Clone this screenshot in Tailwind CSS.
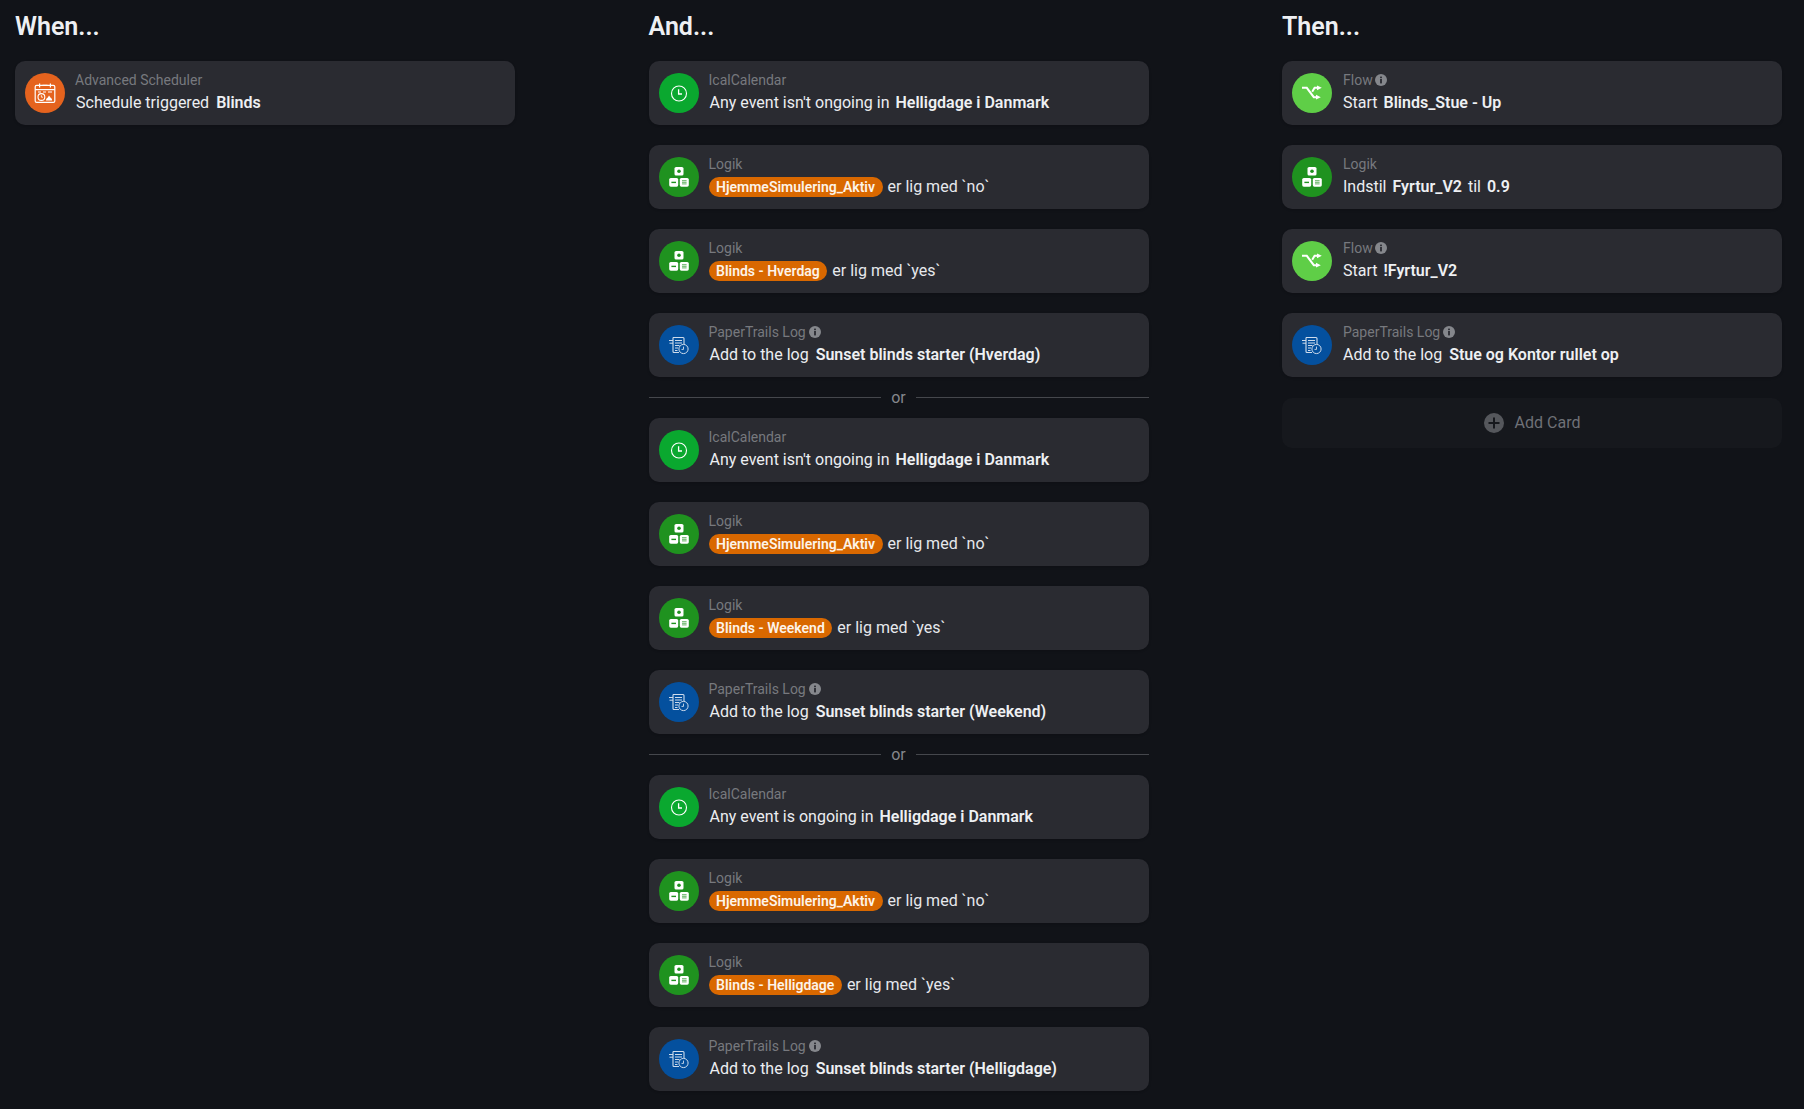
<!DOCTYPE html>
<html lang="en">
  <head>
    <meta charset="UTF-8" />
    <title>Flow</title>
    <script src="https://cdn.jsdelivr.net/npm/@tailwindcss/browser@4"></script>
  </head>
  <body class="bg-[#111318] font-[Roboto,sans-serif] h-[1109px] overflow-hidden">
    <svg class="hidden">
      <symbol id="i-clock" viewBox="0 0 40 40">
        <circle cx="20" cy="20.500" r="7.500" fill="none" stroke="#fff" stroke-width="1.100" />
        <path d="M19.600 16.300v4.700h3.400" fill="none" stroke="#fff" stroke-width="1.300" />
      </symbol>
      <symbol id="i-logic" viewBox="0 0 40 40">
        <rect x="15.500" y="10" width="9" height="8.600" rx="1.600" fill="#fff" />
        <rect x="10.200" y="21" width="9" height="8.700" rx="1.600" fill="#fff" />
        <rect x="20.800" y="21" width="9" height="8.700" rx="1.600" fill="#fff" />
        <circle cx="20" cy="14.300" r="1.800" fill="#1f921f" />
        <rect x="12.400" y="24.700" width="4.600" height="1.400" fill="#1f921f" />
        <path d="M23 23.700h4.600M23 25.300h4.600M23 26.900h4.600" stroke="#1f921f" stroke-width=".7" />
      </symbol>
      <symbol id="i-log" viewBox="0 0 40 40">
        <path d="M14 12.500h10a1 1 0 0 1 1 1v6M14 12.500v14a1 1 0 0 0 1 1h5" fill="none" stroke="#cfdcec" stroke-width="1.100" />
        <path d="M10 15.500H14M10.500 18.200h3.500M16 15.500h7M16 18h7M16 20.500h4.500M16 23h3M16 25.500h2.500" fill="none" stroke="#cfdcec" stroke-width="1" />
        <circle cx="24.500" cy="24" r="4.600" fill="#04509e" stroke="#cfdcec" stroke-width="1" />
        <path d="M24.500 21.600v2.800h-2" fill="none" stroke="#cfdcec" stroke-width=".9" />
      </symbol>
      <symbol id="i-flow" viewBox="0 0 40 40">
        <path d="M10 14.800h4.800l7 9.400h3" fill="none" stroke="#fff" stroke-width="2" />
        <path d="M20.200 18.800l2.400-4h2.600" fill="none" stroke="#fff" stroke-width="2" />
        <path d="M25 12.400l4.800 2.400-4.800 2.400zM24 21.800l4.800 2.400-4.800 2.400z" fill="#fff" />
      </symbol>
      <symbol id="i-cal" viewBox="0 0 40 40">
        <rect x="10.200" y="12.400" width="19.600" height="17" rx="1.400" fill="none" stroke="#fff" stroke-width="1.200" />
        <path d="M10.200 16.600h19.600M14.600 10.400v4M25.400 10.400v4M17.500 12.400h5" fill="none" stroke="#fff" stroke-width="1.200" />
        <path d="M13 19h3M18 19h3M23 19h4" stroke="#fff" stroke-width="1" />
        <circle cx="16.400" cy="24" r="3.400" fill="none" stroke="#fff" stroke-width="1.100" />
        <path d="M16.400 22.200v2h1.600" fill="none" stroke="#fff" stroke-width=".8" />
        <path d="M21 27.400c0-2 1-2.200 1.800-3l1.200-2 1.400 2c.8.600 1.700 1.200 1.700 3z" fill="#fff" />
      </symbol>
      <symbol id="i-info" viewBox="0 0 12 12">
        <circle cx="6" cy="6" r="6" fill="#85878c" />
        <rect x="5.100" y="5" width="1.800" height="4.400" fill="#2a2b31" />
        <rect x="5.100" y="2.600" width="1.800" height="1.600" fill="#2a2b31" />
      </symbol>
    </svg>

    <main class="flex gap-[133.5px] pl-[15px]">
      <!-- When -->
      <section class="w-[500px] shrink-0">
        <h2 class="h-[28px] mt-[13px] mb-[20px] text-[25px] leading-[28px] font-semibold text-[#eef0f3]">When...</h2>
        <div class="flex h-[64px] rounded-[10px] bg-[#2a2b31] pl-[10px] pt-[12px] shadow-sm">
          <div class="w-[40px] h-[40px] rounded-full bg-[#e5631e] shrink-0"><svg class="w-[40px] h-[40px]"><use href="#i-cal" /></svg></div>
          <div class="ml-[10px] -mt-[3px]">
            <div class="flex items-center h-[20px] text-sm text-[#77797e]">Advanced Scheduler</div>
            <div class="flex items-center h-[24px] mt-px ml-px text-base text-[#eceef1]">Schedule triggered<b class="ml-[7px] font-semibold text-[#eef0f3]">Blinds</b></div>
          </div>
        </div>
      </section>

      <!-- And -->
      <section class="w-[500px] shrink-0">
        <h2 class="h-[28px] mt-[13px] mb-[20px] text-[25px] leading-[28px] font-semibold text-[#eef0f3]">And...</h2>
        <div class="flex flex-col gap-[20px]">
          <div class="flex h-[64px] rounded-[10px] bg-[#2a2b31] pl-[10px] pt-[12px] shadow-sm">
            <div class="w-[40px] h-[40px] rounded-full bg-[#0aa82f] shrink-0"><svg class="w-[40px] h-[40px]"><use href="#i-clock" /></svg></div>
            <div class="ml-[10px] -mt-[3px]">
              <div class="flex items-center h-[20px] text-sm text-[#77797e]">IcalCalendar</div>
              <div class="flex items-center h-[24px] mt-px ml-px text-base text-[#eceef1]">Any event isn't ongoing in<b class="ml-[6px] font-semibold text-[#eef0f3]">Helligdage i Danmark</b></div>
            </div>
          </div>
          <div class="flex h-[64px] rounded-[10px] bg-[#2a2b31] pl-[10px] pt-[12px] shadow-sm">
            <div class="w-[40px] h-[40px] rounded-full bg-[#1f921f] shrink-0"><svg class="w-[40px] h-[40px]"><use href="#i-logic" /></svg></div>
            <div class="ml-[10px] -mt-[3px]">
              <div class="flex items-center h-[20px] text-sm text-[#77797e]">Logik</div>
              <div class="flex items-center h-[24px] mt-px text-base text-[#e6e8ec]"><span class="flex items-center h-[20px] -mt-px rounded-full bg-[#d96800] px-[7.5px] mr-[5px] text-sm font-semibold text-[#fdf3e8]">HjemmeSimulering_Aktiv</span>er lig med `no`</div>
            </div>
          </div>
          <div class="flex h-[64px] rounded-[10px] bg-[#2a2b31] pl-[10px] pt-[12px] shadow-sm">
            <div class="w-[40px] h-[40px] rounded-full bg-[#1f921f] shrink-0"><svg class="w-[40px] h-[40px]"><use href="#i-logic" /></svg></div>
            <div class="ml-[10px] -mt-[3px]">
              <div class="flex items-center h-[20px] text-sm text-[#77797e]">Logik</div>
              <div class="flex items-center h-[24px] mt-px text-base text-[#e6e8ec]"><span class="flex items-center h-[20px] -mt-px rounded-full bg-[#d96800] px-[7.5px] mr-[5px] text-sm font-semibold text-[#fdf3e8]">Blinds - Hverdag</span>er lig med `yes`</div>
            </div>
          </div>
          <div class="flex h-[64px] rounded-[10px] bg-[#2a2b31] pl-[10px] pt-[12px] shadow-sm">
            <div class="w-[40px] h-[40px] rounded-full bg-[#04509e] shrink-0"><svg class="w-[40px] h-[40px]"><use href="#i-log" /></svg></div>
            <div class="ml-[10px] -mt-[3px]">
              <div class="flex items-center h-[20px] text-sm text-[#77797e]">PaperTrails Log<svg class="w-[12px] h-[12px] ml-[3px]"><use href="#i-info" /></svg></div>
              <div class="flex items-center h-[24px] mt-px ml-px text-base text-[#eceef1]">Add to the log<b class="ml-[7px] font-semibold text-[#eef0f3]">Sunset blinds starter (Hverdag)</b></div>
            </div>
          </div>
        </div>

        <div class="flex items-center h-[41px] text-base text-[#85878c]"><span class="grow h-px bg-[#45474c]"></span><span class="mx-[10px]">or</span><span class="grow h-px bg-[#45474c]"></span></div>

        <div class="flex flex-col gap-[20px]">
          <div class="flex h-[64px] rounded-[10px] bg-[#2a2b31] pl-[10px] pt-[12px] shadow-sm">
            <div class="w-[40px] h-[40px] rounded-full bg-[#0aa82f] shrink-0"><svg class="w-[40px] h-[40px]"><use href="#i-clock" /></svg></div>
            <div class="ml-[10px] -mt-[3px]">
              <div class="flex items-center h-[20px] text-sm text-[#77797e]">IcalCalendar</div>
              <div class="flex items-center h-[24px] mt-px ml-px text-base text-[#eceef1]">Any event isn't ongoing in<b class="ml-[6px] font-semibold text-[#eef0f3]">Helligdage i Danmark</b></div>
            </div>
          </div>
          <div class="flex h-[64px] rounded-[10px] bg-[#2a2b31] pl-[10px] pt-[12px] shadow-sm">
            <div class="w-[40px] h-[40px] rounded-full bg-[#1f921f] shrink-0"><svg class="w-[40px] h-[40px]"><use href="#i-logic" /></svg></div>
            <div class="ml-[10px] -mt-[3px]">
              <div class="flex items-center h-[20px] text-sm text-[#77797e]">Logik</div>
              <div class="flex items-center h-[24px] mt-px text-base text-[#e6e8ec]"><span class="flex items-center h-[20px] -mt-px rounded-full bg-[#d96800] px-[7.5px] mr-[5px] text-sm font-semibold text-[#fdf3e8]">HjemmeSimulering_Aktiv</span>er lig med `no`</div>
            </div>
          </div>
          <div class="flex h-[64px] rounded-[10px] bg-[#2a2b31] pl-[10px] pt-[12px] shadow-sm">
            <div class="w-[40px] h-[40px] rounded-full bg-[#1f921f] shrink-0"><svg class="w-[40px] h-[40px]"><use href="#i-logic" /></svg></div>
            <div class="ml-[10px] -mt-[3px]">
              <div class="flex items-center h-[20px] text-sm text-[#77797e]">Logik</div>
              <div class="flex items-center h-[24px] mt-px text-base text-[#e6e8ec]"><span class="flex items-center h-[20px] -mt-px rounded-full bg-[#d96800] px-[7.5px] mr-[5px] text-sm font-semibold text-[#fdf3e8]">Blinds - Weekend</span>er lig med `yes`</div>
            </div>
          </div>
          <div class="flex h-[64px] rounded-[10px] bg-[#2a2b31] pl-[10px] pt-[12px] shadow-sm">
            <div class="w-[40px] h-[40px] rounded-full bg-[#04509e] shrink-0"><svg class="w-[40px] h-[40px]"><use href="#i-log" /></svg></div>
            <div class="ml-[10px] -mt-[3px]">
              <div class="flex items-center h-[20px] text-sm text-[#77797e]">PaperTrails Log<svg class="w-[12px] h-[12px] ml-[3px]"><use href="#i-info" /></svg></div>
              <div class="flex items-center h-[24px] mt-px ml-px text-base text-[#eceef1]">Add to the log<b class="ml-[7px] font-semibold text-[#eef0f3]">Sunset blinds starter (Weekend)</b></div>
            </div>
          </div>
        </div>

        <div class="flex items-center h-[41px] text-base text-[#85878c]"><span class="grow h-px bg-[#45474c]"></span><span class="mx-[10px]">or</span><span class="grow h-px bg-[#45474c]"></span></div>

        <div class="flex flex-col gap-[20px]">
          <div class="flex h-[64px] rounded-[10px] bg-[#2a2b31] pl-[10px] pt-[12px] shadow-sm">
            <div class="w-[40px] h-[40px] rounded-full bg-[#0aa82f] shrink-0"><svg class="w-[40px] h-[40px]"><use href="#i-clock" /></svg></div>
            <div class="ml-[10px] -mt-[3px]">
              <div class="flex items-center h-[20px] text-sm text-[#77797e]">IcalCalendar</div>
              <div class="flex items-center h-[24px] mt-px ml-px text-base text-[#eceef1]">Any event is ongoing in<b class="ml-[6px] font-semibold text-[#eef0f3]">Helligdage i Danmark</b></div>
            </div>
          </div>
          <div class="flex h-[64px] rounded-[10px] bg-[#2a2b31] pl-[10px] pt-[12px] shadow-sm">
            <div class="w-[40px] h-[40px] rounded-full bg-[#1f921f] shrink-0"><svg class="w-[40px] h-[40px]"><use href="#i-logic" /></svg></div>
            <div class="ml-[10px] -mt-[3px]">
              <div class="flex items-center h-[20px] text-sm text-[#77797e]">Logik</div>
              <div class="flex items-center h-[24px] mt-px text-base text-[#e6e8ec]"><span class="flex items-center h-[20px] -mt-px rounded-full bg-[#d96800] px-[7.5px] mr-[5px] text-sm font-semibold text-[#fdf3e8]">HjemmeSimulering_Aktiv</span>er lig med `no`</div>
            </div>
          </div>
          <div class="flex h-[64px] rounded-[10px] bg-[#2a2b31] pl-[10px] pt-[12px] shadow-sm">
            <div class="w-[40px] h-[40px] rounded-full bg-[#1f921f] shrink-0"><svg class="w-[40px] h-[40px]"><use href="#i-logic" /></svg></div>
            <div class="ml-[10px] -mt-[3px]">
              <div class="flex items-center h-[20px] text-sm text-[#77797e]">Logik</div>
              <div class="flex items-center h-[24px] mt-px text-base text-[#e6e8ec]"><span class="flex items-center h-[20px] -mt-px rounded-full bg-[#d96800] px-[7.5px] mr-[5px] text-sm font-semibold text-[#fdf3e8]">Blinds - Helligdage</span>er lig med `yes`</div>
            </div>
          </div>
          <div class="flex h-[64px] rounded-[10px] bg-[#2a2b31] pl-[10px] pt-[12px] shadow-sm">
            <div class="w-[40px] h-[40px] rounded-full bg-[#04509e] shrink-0"><svg class="w-[40px] h-[40px]"><use href="#i-log" /></svg></div>
            <div class="ml-[10px] -mt-[3px]">
              <div class="flex items-center h-[20px] text-sm text-[#77797e]">PaperTrails Log<svg class="w-[12px] h-[12px] ml-[3px]"><use href="#i-info" /></svg></div>
              <div class="flex items-center h-[24px] mt-px ml-px text-base text-[#eceef1]">Add to the log<b class="ml-[7px] font-semibold text-[#eef0f3]">Sunset blinds starter (Helligdage)</b></div>
            </div>
          </div>
        </div>
      </section>

      <!-- Then -->
      <section class="w-[500px] shrink-0">
        <h2 class="h-[28px] mt-[13px] mb-[20px] text-[25px] leading-[28px] font-semibold text-[#eef0f3]">Then...</h2>
        <div class="flex flex-col gap-[20px]">
          <div class="flex h-[64px] rounded-[10px] bg-[#2a2b31] pl-[10px] pt-[12px] shadow-sm">
            <div class="w-[40px] h-[40px] rounded-full bg-[#5fce47] shrink-0"><svg class="w-[40px] h-[40px]"><use href="#i-flow" /></svg></div>
            <div class="ml-[11px] -mt-[3px]">
              <div class="flex items-center h-[20px] text-sm text-[#77797e]">Flow<svg class="w-[12px] h-[12px] ml-[2px]"><use href="#i-info" /></svg></div>
              <div class="flex items-center h-[24px] mt-px text-base text-[#eceef1]">Start<b class="ml-[6px] font-semibold text-[#eef0f3]">Blinds_Stue - Up</b></div>
            </div>
          </div>
          <div class="flex h-[64px] rounded-[10px] bg-[#2a2b31] pl-[10px] pt-[12px] shadow-sm">
            <div class="w-[40px] h-[40px] rounded-full bg-[#1f921f] shrink-0"><svg class="w-[40px] h-[40px]"><use href="#i-logic" /></svg></div>
            <div class="ml-[11px] -mt-[3px]">
              <div class="flex items-center h-[20px] text-sm text-[#77797e]">Logik</div>
              <div class="flex items-center h-[24px] mt-px text-base text-[#eceef1]">Indstil<b class="mx-[6px] font-semibold text-[#eef0f3]">Fyrtur_V2</b>til<b class="ml-[6px] font-semibold text-[#eef0f3]">0.9</b></div>
            </div>
          </div>
          <div class="flex h-[64px] rounded-[10px] bg-[#2a2b31] pl-[10px] pt-[12px] shadow-sm">
            <div class="w-[40px] h-[40px] rounded-full bg-[#5fce47] shrink-0"><svg class="w-[40px] h-[40px]"><use href="#i-flow" /></svg></div>
            <div class="ml-[11px] -mt-[3px]">
              <div class="flex items-center h-[20px] text-sm text-[#77797e]">Flow<svg class="w-[12px] h-[12px] ml-[2px]"><use href="#i-info" /></svg></div>
              <div class="flex items-center h-[24px] mt-px text-base text-[#eceef1]">Start<b class="ml-[6px] font-semibold text-[#eef0f3]">!Fyrtur_V2</b></div>
            </div>
          </div>
          <div class="flex h-[64px] rounded-[10px] bg-[#2a2b31] pl-[10px] pt-[12px] shadow-sm">
            <div class="w-[40px] h-[40px] rounded-full bg-[#04509e] shrink-0"><svg class="w-[40px] h-[40px]"><use href="#i-log" /></svg></div>
            <div class="ml-[11px] -mt-[3px]">
              <div class="flex items-center h-[20px] text-sm text-[#77797e]">PaperTrails Log<svg class="w-[12px] h-[12px] ml-[3px]"><use href="#i-info" /></svg></div>
              <div class="flex items-center h-[24px] mt-px text-base text-[#eceef1]">Add to the log<b class="ml-[7px] font-semibold text-[#eef0f3]">Stue og Kontor rullet op</b></div>
            </div>
          </div>
          <div class="flex items-center justify-center h-[50px] mt-px rounded-[10px] bg-[#16181d] text-base text-[#6f7177]">
            <svg class="w-[20px] h-[20px] mr-[11px]" viewBox="0 0 20 20"><circle cx="10" cy="10" r="10" fill="#55575c" /><path d="M10 4.500v11M4.500 10h11" stroke="#16181d" stroke-width="2" /></svg>
            Add Card
          </div>
        </div>
      </section>
    </main>
  </body>
</html>
